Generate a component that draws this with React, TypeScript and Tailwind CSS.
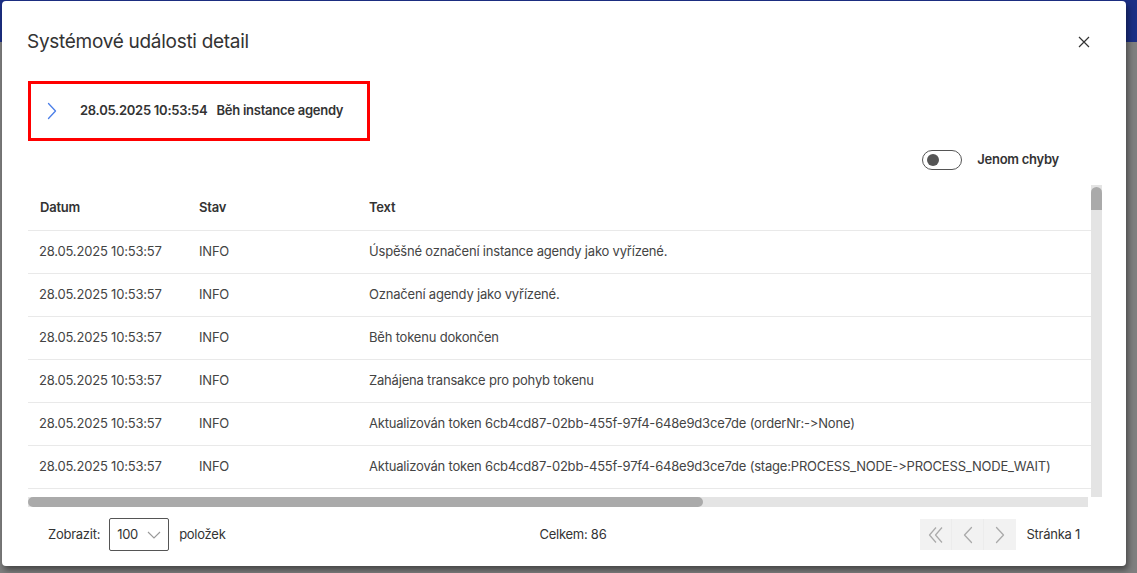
const rows = [
  { date: "28.05.2025 10:53:57", state: "INFO", text: "Úspěšné označení instance agendy jako vyřízené." },
  { date: "28.05.2025 10:53:57", state: "INFO", text: "Označení agendy jako vyřízené." },
  { date: "28.05.2025 10:53:57", state: "INFO", text: "Běh tokenu dokončen" },
  { date: "28.05.2025 10:53:57", state: "INFO", text: "Zahájena transakce pro pohyb tokenu" },
  { date: "28.05.2025 10:53:57", state: "INFO", text: "Aktualizován token 6cb4cd87-02bb-455f-97f4-648e9d3ce7de (orderNr:->None)" },
  { date: "28.05.2025 10:53:57", state: "INFO", text: "Aktualizován token 6cb4cd87-02bb-455f-97f4-648e9d3ce7de (stage:PROCESS_NODE->PROCESS_NODE_WAIT)" },
]

function Chevron({ dir, className }: { dir: "left" | "right"; className?: string }) {
  return (
    <svg width="10" height="18" viewBox="0 0 10 18" fill="none" className={className}>
      <path
        d={dir === "right" ? "M1.5 1.5 L8.5 9 L1.5 16.5" : "M8.5 1.5 L1.5 9 L8.5 16.5"}
        stroke="currentColor"
        strokeWidth="1.3"
        strokeLinecap="round"
        strokeLinejoin="round"
      />
    </svg>
  )
}

export default function App() {
  return (
    <div className="relative h-[573px] w-[1137px] overflow-hidden font-['Inter',sans-serif] text-[#333]">
      {/* page behind overlay */}
      <div className="flex h-full flex-col">
        <div className="h-[42px] bg-[#1c2f85]"></div>
        <div className="flex-1 bg-[#7f7f7f]"></div>
      </div>

      {/* modal */}
      <div className="absolute left-[2px] top-[1px] flex h-[565px] w-[1124px] flex-col rounded-[4px] bg-white shadow-[2px_4px_6px_rgba(0,0,0,0.45)]">
        <div className="flex items-center justify-between pl-[25px] pr-[36px] pt-[28px]">
          <h1 className="text-[19px] leading-[26px] tracking-[-0.015em] text-[#333]">Systémové události detail</h1>
          <svg width="12" height="12" viewBox="0 0 12 12" className="text-[#333]">
            <path d="M1 1 L11 11 M11 1 L1 11" stroke="currentColor" strokeWidth="1.2" />
          </svg>
        </div>

        <div className="ml-[26px] mt-[26px] flex h-[60px] w-[342px] items-center border-[3px] border-[#ff0000] pl-[16px]">
          <Chevron dir="right" className="text-[#4a7ee8]" />
          <span className="ml-[23px] text-[13px] font-semibold tracking-[-0.02em] text-[#333]">
            28.05.2025 10:53:54&nbsp;&nbsp;&nbsp;Běh instance agendy
          </span>
        </div>

        <div className="mr-[67px] mt-[9px] flex items-center justify-end gap-[15px]">
          <div className="flex h-[20px] w-[40px] items-center rounded-full border border-[#555] pl-[4px]">
            <div className="h-[12px] w-[12px] rounded-full bg-[#555]"></div>
          </div>
          <span className="text-[13px] font-semibold tracking-[-0.02em] text-[#333]">Jenom chyby</span>
        </div>

        <div className="ml-[26px] mr-[24px] mt-[15px] flex flex-col">
          <div className="flex">
            <div className="h-[312px] flex-1 overflow-hidden">
              <div className="w-[1660px] text-[13px] tracking-[-0.015em]">
                <div className="flex h-[46px] items-center border-b border-[#e9e9e9] pt-[1px] font-semibold text-[#333]">
                  <div className="w-[160px] pl-[12px]">Datum</div>
                  <div className="w-[170px] pl-[11px]">Stav</div>
                  <div className="flex-1 pl-[11px]">Text</div>
                </div>
                {rows.map((r, i) => (
                  <div key={i} className="flex h-[43px] items-center border-b border-[#e9e9e9] pb-[1px] text-[#444]">
                    <div className="w-[160px] pl-[11px]">{r.date}</div>
                    <div className="w-[170px] pl-[11px]">{r.state}</div>
                    <div className="flex-1 pl-[11px]">{r.text}</div>
                  </div>
                ))}
                <div className="h-[43px] border-b border-[#e9e9e9]"></div>
              </div>
            </div>
            <div className="h-[312px] w-[11px] bg-[#e4e4e4] pt-[2px]">
              <div className="h-[23px] w-[11px] rounded-t-full rounded-b-[2px] bg-[#aaaaaa]"></div>
            </div>
          </div>
          <div className="flex h-[10px] w-[1060px] bg-[#e4e4e4]">
            <div className="h-[10px] w-[675px] rounded-full bg-[#aaaaaa]"></div>
          </div>
        </div>

        <div className="flex flex-1 items-center justify-between pb-[4px] pl-[46px] pr-[46px] text-[13px] tracking-[-0.02em] text-[#333]">
          <div className="flex items-center">
            <span>Zobrazit:</span>
            <div className="ml-[9px] flex h-[33px] w-[60px] items-center justify-between rounded-[2px] border border-[#555] pl-[7px] pr-[7px]">
              <span>100</span>
              <svg width="14" height="8" viewBox="0 0 14 8" fill="none" className="text-[#999]">
                <path d="M1 1 L7 7 L13 1" stroke="currentColor" strokeWidth="1.1" />
              </svg>
            </div>
            <span className="ml-[10px]">položek</span>
          </div>
          <span>Celkem: 86</span>
          <div className="flex items-center">
            <div className="flex h-[31px] bg-[#f2f2f2]">
              <div className="flex w-[32px] items-center justify-center border-r border-[#ececec] text-[#aaa]">
                <svg width="16" height="18" viewBox="0 0 16 18" fill="none">
                  <path d="M8 1.5 L1.5 9 L8 16.5 M14 1.5 L7.5 9 L14 16.5" stroke="currentColor" strokeWidth="1.2" strokeLinejoin="round" />
                </svg>
              </div>
              <div className="flex w-[32px] items-center justify-center border-r border-[#ececec] text-[#aaa]">
                <Chevron dir="left" />
              </div>
              <div className="flex w-[32px] items-center justify-center text-[#aaa]">
                <Chevron dir="right" />
              </div>
            </div>
            <span className="ml-[10px]">Stránka 1</span>
          </div>
        </div>
      </div>
    </div>
  )
}
